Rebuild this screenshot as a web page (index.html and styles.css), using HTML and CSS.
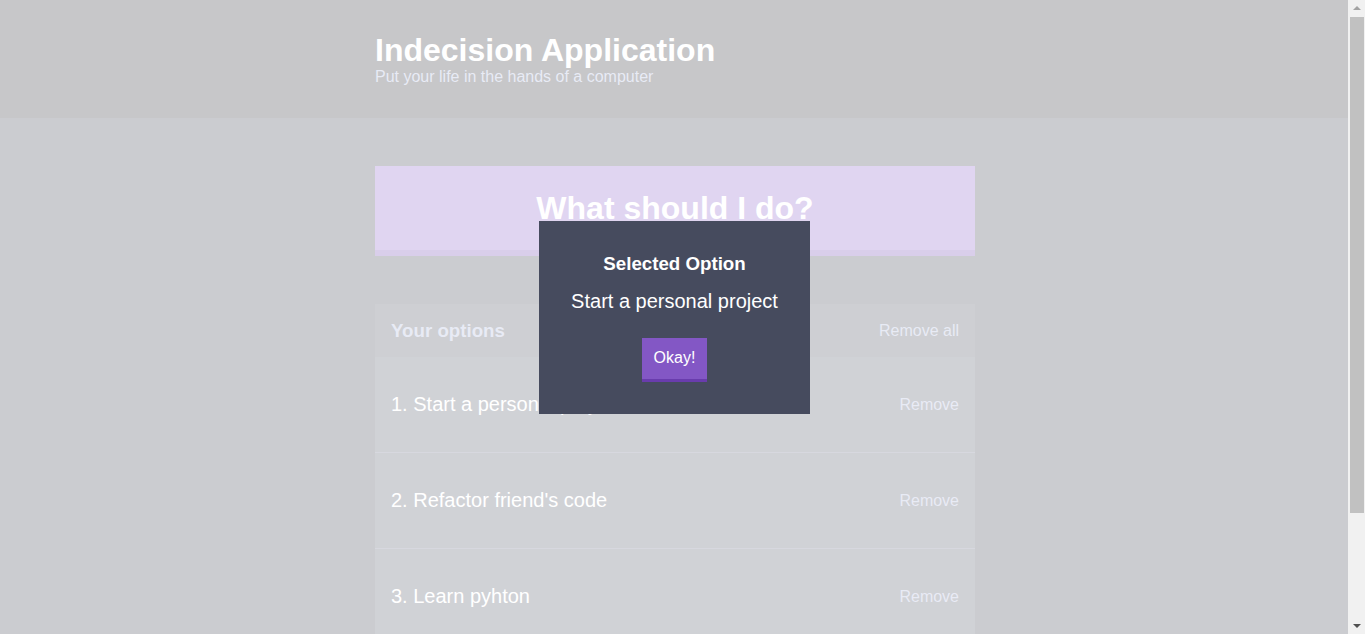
FILE: index.html
```html
<!DOCTYPE html>
<html lang="en">
<head>
<meta charset="utf-8">
<title>Indecision</title>
<link rel="stylesheet" href="styles.css">
</head>
<body>
<div class="app">
  <header class="header">
    <div class="container">
      <h1 class="header__title">Indecision Application</h1>
      <h2 class="header__subtitle">Put your life in the hands of a computer</h2>
    </div>
  </header>
  <main class="container main">
    <button class="big-button">What should I do?</button>
    <section class="widget">
      <div class="widget-header">
        <h3 class="widget-header__title">Your options</h3>
        <button class="button--link">Remove all</button>
      </div>
      <div class="option">
        <p class="option__text">1. Start a personal project</p>
        <button class="button--link">Remove</button>
      </div>
      <div class="option">
        <p class="option__text">2. Refactor friend's code</p>
        <button class="button--link">Remove</button>
      </div>
      <div class="option">
        <p class="option__text">3. Learn pyhton</p>
        <button class="button--link">Remove</button>
      </div>
      <form class="add-option">
        <input class="add-option__input" type="text" name="option">
        <button class="button" type="button">Add Option</button>
      </form>
    </section>
  </main>
</div>
<div class="overlay">
  <div class="modal">
    <h3 class="modal__title">Selected Option</h3>
    <p class="modal__body">Start a personal project</p>
    <button class="button">Okay!</button>
  </div>
</div>
<div class="scrollbar" aria-hidden="true">
  <div class="scrollbar__arrow scrollbar__arrow--up"></div>
  <div class="scrollbar__track">
    <div class="scrollbar__thumb"></div>
  </div>
  <div class="scrollbar__arrow scrollbar__arrow--down"></div>
</div>
</body>
</html>
```
FILE: styles.css
```css
html {
  font-family: "Liberation Sans", Arial, sans-serif;
}
body {
  margin: 0;
  background: #333745;
  color: #ffffff;
  font-family: "Liberation Sans", Arial, sans-serif;
}
button, input {
  font-family: "Liberation Sans", Arial, sans-serif;
}
.app {
  margin-right: 15px;
}
.container {
  width: 600px;
  margin: 0 auto;
}
.header {
  background: #20222b;
  padding: 31.5px 0 32px;
}
.header__title {
  margin: 0;
  font-size: 32px;
  line-height: 36px;
  font-weight: bold;
  color: #ffffff;
}
.header__subtitle {
  margin: 0;
  font-size: 16px;
  line-height: 18px;
  font-weight: normal;
  color: #a5afd7;
}
.main {
  padding: 48px 0 44px;
}
.big-button {
  display: block;
  width: 100%;
  background: #8357c5;
  border: none;
  border-bottom: 6px solid #693cad;
  color: #ffffff;
  font-size: 32px;
  line-height: 36px;
  font-weight: bold;
  padding: 24px 0;
  margin: 0 0 48px;
}
.widget {
  background: #464b5e;
}
.widget-header {
  background: #3c4251;
  display: flex;
  justify-content: space-between;
  align-items: center;
  padding: 16px;
}
.widget-header__title {
  margin: 0;
  font-size: 18.72px;
  line-height: 21px;
  color: #a5afd7;
}
.button--link {
  background: none;
  border: none;
  padding: 2px 0 0;
  color: #a5afd7;
  font-size: 16px;
}
.option {
  display: flex;
  justify-content: space-between;
  align-items: center;
  padding: 16px;
  border-bottom: 1px solid #5f6680;
}
.option__text {
  margin: 20px 0;
  font-size: 20px;
  line-height: 23px;
  color: #ffffff;
}
.add-option {
  display: flex;
  padding: 16px;
}
.add-option__input {
  flex-grow: 1;
  background: #333745;
  border: none;
  border-bottom: 3px solid #20222b;
  color: #a5afd7;
  font-size: 16px;
  padding: 12px;
  margin-right: 12px;
}
.button {
  background: #8357c5;
  border: none;
  border-bottom: 3px solid #693cad;
  color: #ffffff;
  font-size: 16px;
  font-weight: 500;
  padding: 11.5px 12px;
  line-height: normal;
}
.overlay {
  position: fixed;
  top: 0;
  bottom: 0;
  left: 0;
  right: 16px;
  background: rgba(255, 255, 255, 0.75);
  display: flex;
  align-items: center;
  justify-content: center;
}
.modal {
  background: #464b5e;
  color: #ffffff;
  max-width: 480px;
  padding: 32px;
  text-align: center;
}
.modal__title {
  margin: 0 0 15px;
  font-size: 18.72px;
  font-weight: bold;
}
.modal__body {
  margin: 0 0 25px;
  font-size: 20px;
  font-weight: normal;
}
.scrollbar {
  position: fixed;
  top: 0;
  right: 0;
  bottom: 0;
  width: 17px;
  background: #f1f1f1;
  display: flex;
  flex-direction: column;
}
.scrollbar__arrow {
  height: 17px;
  flex: none;
  position: relative;
}
.scrollbar__arrow::after {
  content: "";
  position: absolute;
  left: 5px;
  width: 0;
  height: 0;
  border-left: 4px solid transparent;
  border-right: 4px solid transparent;
}
.scrollbar__arrow--up::after {
  top: 6px;
  border-bottom: 4px solid #a3a3a3;
}
.scrollbar__arrow--down::after {
  bottom: 6px;
  border-top: 4px solid #505050;
}
.scrollbar__track {
  flex: 1;
  position: relative;
}
.scrollbar__thumb {
  position: absolute;
  top: 0;
  left: 2px;
  right: 1px;
  height: 496px;
  background: #c1c1c1;
}
```
